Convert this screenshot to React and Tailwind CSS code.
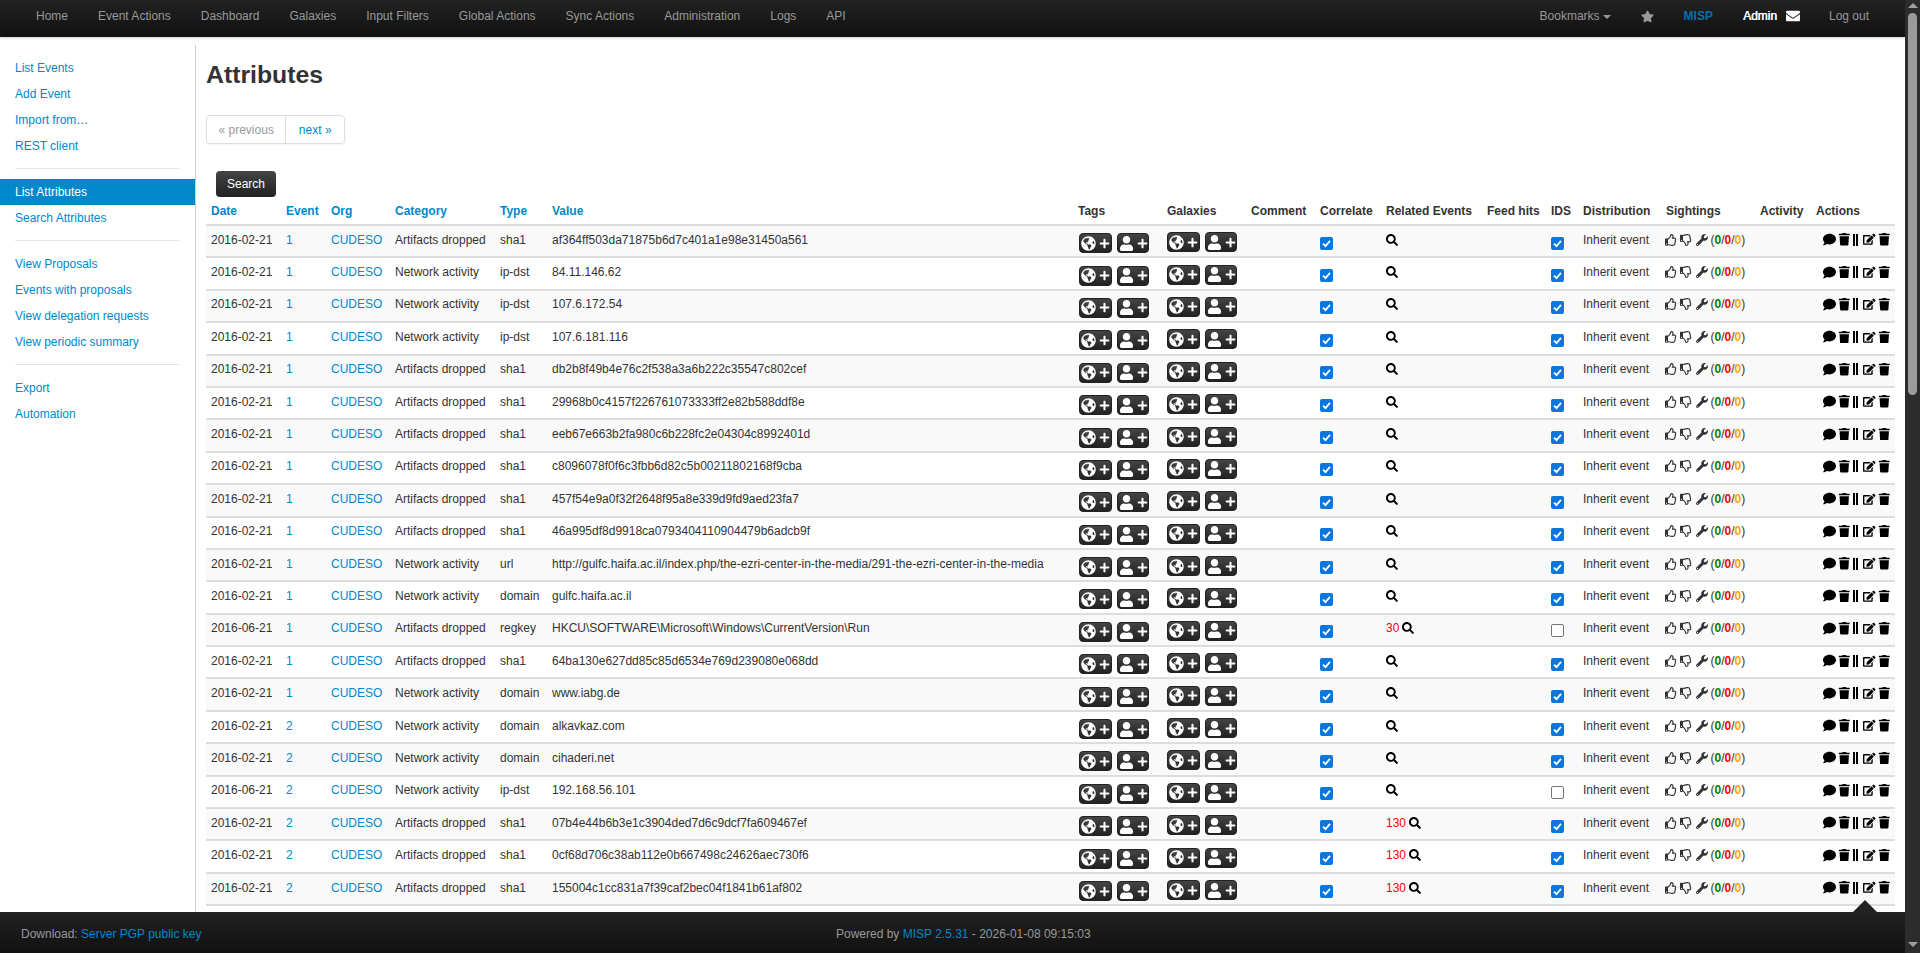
import React from "react";
import { FaGlobeAmericas, FaPlus, FaUser, FaRegThumbsUp, FaRegThumbsDown, FaWrench, FaComment, FaTrash, FaEdit, FaEnvelope, FaStar, FaSearch } from "react-icons/fa";

const F = "font-['Liberation_Sans','Helvetica_Neue',Arial,sans-serif]";
const nav = ["Home","Event Actions","Dashboard","Galaxies","Input Filters","Global Actions","Sync Actions","Administration","Logs","API"];
const h1 = "af364ff503da71875b6d7c401a1e98e31450a561";
const rows = [
["2016-02-21","1","Artifacts dropped","sha1",h1],
["2016-02-21","1","Network activity","ip-dst","84.11.146.62"],
["2016-02-21","1","Network activity","ip-dst","107.6.172.54"],
["2016-02-21","1","Network activity","ip-dst","107.6.181.116"],
["2016-02-21","1","Artifacts dropped","sha1","db2b8f49b4e76c2f538a3a6b222c35547c802cef"],
["2016-02-21","1","Artifacts dropped","sha1","29968b0c4157f226761073333ff2e82b588ddf8e"],
["2016-02-21","1","Artifacts dropped","sha1","eeb67e663b2fa980c6b228fc2e04304c8992401d"],
["2016-02-21","1","Artifacts dropped","sha1","c8096078f0f6c3fbb6d82c5b00211802168f9cba"],
["2016-02-21","1","Artifacts dropped","sha1","457f54e9a0f32f2648f95a8e339d9fd9aed23fa7"],
["2016-02-21","1","Artifacts dropped","sha1","46a995df8d9918ca0793404110904479b6adcb9f"],
["2016-02-21","1","Network activity","url","http://gulfc.haifa.ac.il/index.php/the-ezri-center-in-the-media/291-the-ezri-center-in-the-media"],
["2016-02-21","1","Network activity","domain","gulfc.haifa.ac.il"],
["2016-06-21","1","Artifacts dropped","regkey","HKCU\\SOFTWARE\\Microsoft\\Windows\\CurrentVersion\\Run","30",false],
["2016-02-21","1","Artifacts dropped","sha1","64ba130e627dd85c85d6534e769d239080e068dd"],
["2016-02-21","1","Network activity","domain","www.iabg.de"],
["2016-02-21","2","Network activity","domain","alkavkaz.com"],
["2016-02-21","2","Network activity","domain","cihaderi.net"],
["2016-06-21","2","Network activity","ip-dst","192.168.56.101","",false],
["2016-02-21","2","Artifacts dropped","sha1","07b4e44b6b3e1c3904ded7d6c9dcf7fa609467ef","130"],
["2016-02-21","2","Artifacts dropped","sha1","0cf68d706c38ab112e0b667498c24626aec730f6","130"],
["2016-02-21","2","Artifacts dropped","sha1","155004c1cc831a7f39caf2bec04f1841b61af802","130"],
];
const heads = [["Date",75,1],["Event",45,1],["Org",64,1],["Category",105,1],["Type",52,1],["Value",526,1],["Tags",89],["Galaxies",84],["Comment",69],["Correlate",66],["Related Events",101],["Feed hits",64],["IDS",32],["Distribution",83],["Sightings",94],["Activity",56],["Actions",84]];

function Side({ children, active }) {
  return <div className={`h-[26px] pl-[15px] leading-[26px] ${active ? "bg-[#0088cc] text-white" : "text-[#0088cc]"}`}>{children}</div>;
}
function Divider() {
  return <div className="mx-[15px] mb-[10px] mt-[9px] h-px bg-[#e5e5e5]" />;
}
function Btn({ icon, w }) {
  return (
    <span className="inline-flex h-5 items-center justify-center gap-[3px] rounded-[4px] border border-[#222222] bg-gradient-to-b from-[#444444] to-[#222222] text-white" style={{ width: w }}>
      {icon}<FaPlus className="text-[11px]" />
    </span>
  );
}
function TagBtns({ up }) {
  return (
    <div className={`flex gap-[5px] ${up ? "-translate-y-px" : ""}`}>
      <Btn w={33} icon={<FaGlobeAmericas className="text-[15px]" />} />
      <Btn w={32} icon={<FaUser className="text-[15px]" />} />
    </div>
  );
}
function Check({ on }) {
  return on ? (
    <span className="inline-flex h-[13px] w-[13px] items-center justify-center rounded-[2px] bg-[#0b76dc]">
      <svg viewBox="0 0 12 12" className="h-[11px] w-[11px]"><path d="M2.2 6.2 L4.9 8.9 L9.8 3.2" fill="none" stroke="white" strokeWidth="2" /></svg>
    </span>
  ) : <span className="inline-block h-[13px] w-[13px] rounded-[2px] border border-[#767676] bg-white" />;
}
function Row({ r, i }) {
  const [date, ev, cat, type, val, rel, ids = true] = r;
  return (
    <tr className={`h-[32.4px] border-b-2 border-[#dddddd] ${i % 2 === 0 ? "bg-[#f9f9f9]" : "bg-white"}`}>
      <td className="px-[5px] pb-[3px]">{date}</td>
      <td className="px-[5px] pb-[3px] text-[#0088cc]">{ev}</td>
      <td className="px-[5px] pb-[3px] text-[#0088cc]">CUDESO</td>
      <td className="px-[5px] pb-[3px]">{cat}</td>
      <td className="px-[5px] pb-[3px]">{type}</td>
      <td className="overflow-hidden whitespace-nowrap px-[5px] pb-[3px]">{val}</td>
      <td className="px-[6px] pt-[4px]"><TagBtns /></td>
      <td className="px-[5px] pt-[4px]"><TagBtns up /></td>
      <td className="px-[5px]" />
      <td className="px-[5px] pt-[7px]"><Check on /></td>
      <td className="px-[5px] pb-[3px]">
        <div className="flex items-center gap-[3px]">
          {rel ? <span className="text-[#ff0000]">{rel}</span> : null}
          <FaSearch className="text-[12px] text-black" />
        </div>
      </td>
      <td className="px-[5px]" />
      <td className="px-[5px] pt-[7px]"><Check on={ids} /></td>
      <td className="px-[5px] pb-[3px]">Inherit event</td>
      <td className="px-[5px] pb-[3px]">
        <div className="-ml-[1.5px] flex items-center whitespace-nowrap">
          <FaRegThumbsUp className="mr-[3px] text-[12px]" />
          <FaRegThumbsDown className="mr-[4px] text-[12px]" />
          <FaWrench className="mr-[3px] text-[12px]" />
          <span>(<b className="text-[#008000]">0</b>/<b className="text-[#ff0000]">0</b>/<b className="text-[#ffa500]">0</b>)</span>
        </div>
      </td>
      <td className="px-[5px]" />
      <td className="px-[5px] pb-[3px]">
        <div className="flex items-center justify-end text-black">
          <FaComment className="mr-[2px] text-[13px]" />
          <FaTrash className="mr-[3px] text-[12.5px]" />
          <span className="mr-[5px] inline-block h-[12px] w-[5px] border-x-2 border-black" />
          <FaEdit className="mr-[2px] text-[12.5px]" />
          <FaTrash className="text-[12.5px]" />
        </div>
      </td>
    </tr>
  );
}

export default function App() {
  return (
    <div className={`flex h-[953px] w-[1920px] overflow-hidden bg-white text-[12px] leading-[18px] text-[#333333] ${F}`}>
      <div className="relative flex h-full w-[1905px] flex-col">
        <header className="flex h-[37px] shrink-0 items-center bg-gradient-to-b from-[#222222] to-[#111111] pb-[5px] text-[#999999] shadow-[0_1px_3px_rgba(0,0,0,0.2)]">
          <nav className="flex pl-[36px]">
            {nav.map((n) => <span key={n} className="mr-[30px] whitespace-nowrap">{n}</span>)}
          </nav>
          <div className="ml-auto flex items-center">
            <span className="flex items-center whitespace-nowrap">Bookmarks<span className="ml-[3px] mt-[1px] border-x-[4px] border-t-[4px] border-x-transparent border-t-[#999999]" /></span>
            <FaStar className="ml-[30px] text-[13px]" />
            <span className="ml-[30px] font-bold text-[#0070b0]">MISP</span>
            <span className="ml-[30px] text-white [text-shadow:0.5px_0_0_#ffffff]">Admin</span>
            <FaEnvelope className="ml-[9px] text-[14px] text-white" />
            <span className="ml-[29px] mr-[36px] whitespace-nowrap">Log out</span>
          </div>
        </header>
        <div className="flex min-h-0 flex-1">
          <aside className="mt-[8px] w-[196px] shrink-0 border-r border-[#cccccc] pt-[10px]">
            <Side>List Events</Side><Side>Add Event</Side><Side>Import from…</Side><Side>REST client</Side>
            <Divider />
            <Side active>List Attributes</Side><Side>Search Attributes</Side>
            <Divider />
            <Side>View Proposals</Side><Side>Events with proposals</Side><Side>View delegation requests</Side><Side>View periodic summary</Side>
            <Divider />
            <Side>Export</Side><Side>Automation</Side>
          </aside>
          <main className="min-w-0 flex-1 pl-[10px] pr-[10px]">
            <h2 className="mt-[21px] h-[34px] text-[24.8px] font-bold leading-[34px] text-[#333333]">Attributes</h2>
            <div className="mt-[23px] flex h-[29px] w-[139px] rounded-[4px] border border-[#dddddd] shadow-[0_1px_2px_rgba(0,0,0,0.05)]">
              <span className="flex w-[80px] items-center justify-center border-r border-[#dddddd] text-[#999999]">« previous</span>
              <span className="flex w-[58px] items-center justify-center text-[#0088cc]">next »</span>
            </div>
            <div className="mt-[27px] h-[26px] pl-[10px]">
              <span className="flex h-[26px] w-[60px] items-center justify-center rounded-[4px] bg-gradient-to-b from-[#444444] to-[#222222] text-white">Search</span>
            </div>
            <table className="w-[1689px] table-fixed border-collapse">
              <colgroup>{heads.map(([n, w]) => <col key={n} style={{ width: w }} />)}</colgroup>
              <thead>
                <tr className="h-[28px] border-b-2 border-[#dddddd]">
                  {heads.map(([n, , link]) => (
                    <th key={n} className={`whitespace-nowrap px-[5px] text-left font-bold ${link ? "text-[#0088cc]" : "text-[#333333]"}`}>{n}</th>
                  ))}
                </tr>
              </thead>
              <tbody>{rows.map((r, i) => <Row key={i} r={r} i={i} />)}</tbody>
            </table>
          </main>
        </div>
        <footer className="absolute bottom-0 left-0 flex h-[41px] w-[1905px] items-center bg-gradient-to-b from-[#222222] to-[#111111] pt-[3px] text-[#999999]">
          <span className="ml-[21px]">Download: <span className="text-[#0088cc]">Server PGP public key</span></span>
          <span className="absolute left-[836px]">Powered by <span className="text-[#0088cc]">MISP 2.5.31</span> - 2026-01-08 09:15:03</span>
          <span className="absolute -top-[12px] left-[1853px] border-x-[12px] border-b-[12px] border-x-transparent border-b-[#222222]" />
        </footer>
      </div>
      <div className="relative flex h-full w-[15px] shrink-0 flex-col items-center bg-[#2c2c2c]">
        <span className="mt-[3px] border-x-[5px] border-b-[5px] border-x-transparent border-b-[#a0a0a0]" />
        <span className="mt-[5px] h-[382px] w-[9px] rounded-[5px] bg-[#9b9b9b]" />
        <span className="mb-[6px] mt-auto border-x-[5px] border-t-[5px] border-x-transparent border-t-[#a0a0a0]" />
      </div>
    </div>
  );
}
